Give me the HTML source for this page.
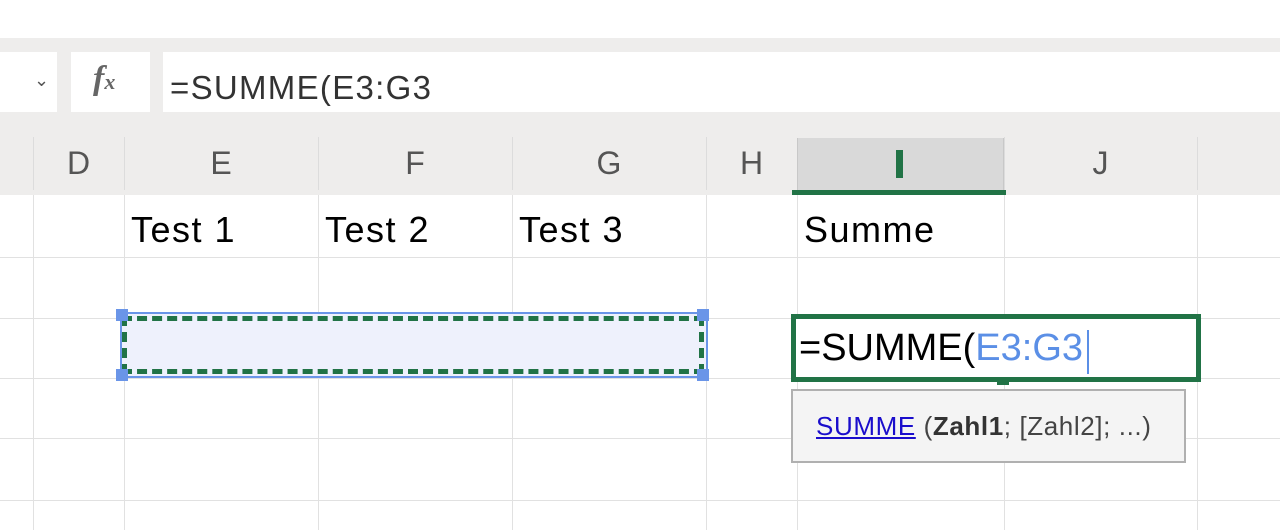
<!DOCTYPE html>
<html><head><meta charset="utf-8"><style>
body{margin:0;width:1280px;height:530px;overflow:hidden;background:#fff;font-family:"Liberation Sans",sans-serif;position:relative}
div{position:absolute;box-sizing:border-box}
.t{font-size:36px;color:#000;top:209px;letter-spacing:1.5px;white-space:nowrap}
.h{top:145px;font-size:32px;color:#555;text-align:center}
.vl{width:1px;background:#e1e1e1;top:195px;height:335px}
.hl{height:1px;background:#e1e1e1;left:0;width:1280px}
.hs{width:1px;background:#dcdcdc;top:137px;height:53px}
</style></head><body>
<div style="left:0;top:38px;width:1280px;height:157px;background:#eeedec"></div>
<div style="left:0;top:52px;width:57px;height:60px;background:#fff"></div>
<div style="left:34px;top:70px;font-size:18px;color:#555">&#x2304;</div>
<div style="left:71px;top:52px;width:79px;height:60px;background:#fff"></div>
<div style="left:93px;top:60px;font-family:'Liberation Serif',serif;font-style:italic;font-weight:bold;font-size:34px;color:#666">f<span style="font-size:22px">x</span></div>
<div style="left:163px;top:52px;width:1117px;height:60px;background:#fff"></div>
<div style="left:170px;top:69px;font-size:33px;color:#333;letter-spacing:1.3px">=SUMME(E3:G3</div>
<div class="hs" style="left:33px"></div><div class="hs" style="left:124px"></div><div class="hs" style="left:318px"></div><div class="hs" style="left:512px"></div><div class="hs" style="left:706px"></div><div class="hs" style="left:1004px"></div><div class="hs" style="left:1197px"></div>
<div style="left:797px;top:138px;width:207px;height:52px;background:#d9d9d9;border-left:1px solid #c8c8c8;border-right:1px solid #c8c8c8"></div>
<div style="left:792px;top:190px;width:214px;height:5px;background:#217346"></div>
<div class="h" style="left:33px;width:91px">D</div>
<div class="h" style="left:124px;width:194px">E</div>
<div class="h" style="left:318px;width:194px">F</div>
<div class="h" style="left:512px;width:194px">G</div>
<div class="h" style="left:706px;width:91px">H</div>
<div style="left:896px;top:150px;width:7px;height:28px;background:#217346"></div>
<div class="h" style="left:1004px;width:193px">J</div>
<div class="vl" style="left:33px"></div><div class="vl" style="left:124px"></div><div class="vl" style="left:318px"></div><div class="vl" style="left:512px"></div><div class="vl" style="left:706px"></div><div class="vl" style="left:797px"></div><div class="vl" style="left:1004px"></div><div class="vl" style="left:1197px"></div>
<div class="hl" style="top:257px"></div><div class="hl" style="top:318px"></div><div class="hl" style="top:378px"></div><div class="hl" style="top:438px"></div><div class="hl" style="top:500px"></div>
<div class="t" style="left:131px">Test 1</div>
<div class="t" style="left:325px">Test 2</div>
<div class="t" style="left:519px">Test 3</div>
<div class="t" style="left:804px">Summe</div>
<div style="left:120px;top:312px;width:588px;height:66px;border:2px solid #6a95e8;background:#eef1fc"></div>
<div style="left:122px;top:316px;width:582px;height:58px;border:5px dashed #217346"></div>
<div style="left:116px;top:309px;width:12px;height:12px;background:#6a95e8"></div>
<div style="left:116px;top:369px;width:12px;height:12px;background:#6a95e8"></div>
<div style="left:697px;top:309px;width:12px;height:12px;background:#6a95e8"></div>
<div style="left:697px;top:369px;width:12px;height:12px;background:#6a95e8"></div>
<div style="left:791px;top:314px;width:410px;height:68px;border:5px solid #217346;background:#fff"></div>
<div style="left:997px;top:380px;width:12px;height:5px;background:#217346"></div>
<div style="left:799px;top:327px;font-size:38px;color:#000;white-space:nowrap">=SUMME(<span style="color:#5b8fe6">E3:G3</span></div>
<div style="left:1087px;top:330px;width:2px;height:44px;background:#5b8fe6"></div>
<div style="left:791px;top:389px;width:395px;height:74px;border:2px solid #b0b0b0;background:#f4f4f4"></div>
<div style="left:816px;top:411px;font-size:26px;color:#444;white-space:nowrap;letter-spacing:0.6px"><span style="color:#1a0dcc;text-decoration:underline">SUMME</span> (<b style="color:#333">Zahl1</b>; [Zahl2]; ...)</div>
</body></html>
